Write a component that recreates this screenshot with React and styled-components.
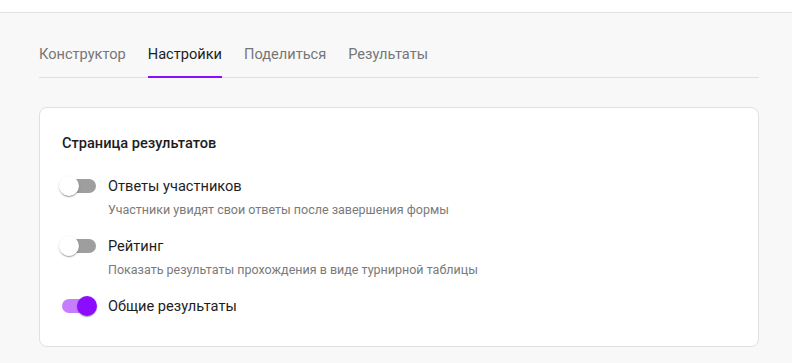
import styled, { createGlobalStyle } from "styled-components"

const GlobalStyle = createGlobalStyle`
    html, body {
        margin: 0;
        padding: 0;
        background: #f8f8f8;
        font-family: Roboto, "Liberation Sans", Arial, sans-serif;
    }
`

const tabs = ["Конструктор", "Настройки", "Поделиться", "Результаты"]

const options = [
    { title: "Ответы участников", text: "Участники увидят свои ответы после завершения формы", on: false },
    { title: "Рейтинг", text: "Показать результаты прохождения в виде турнирной таблицы", on: false },
    { title: "Общие результаты", on: true },
]

export default function App() {
    return (
        <>
            <GlobalStyle />
            <Header />
            <Page>
                <Tabs>
                    {tabs.map((t) => (
                        <Tab key={t} $active={t === "Настройки"}>{t}</Tab>
                    ))}
                </Tabs>
                <Card>
                    <Title>Страница результатов</Title>
                    <List>
                        {options.map((o) => (
                            <Row key={o.title}>
                                <Switch $on={o.on}>
                                    <Track $on={o.on} />
                                    <Thumb $on={o.on} />
                                </Switch>
                                <div>
                                    <Label>{o.title}</Label>
                                    {o.text && <Hint>{o.text}</Hint>}
                                </div>
                            </Row>
                        ))}
                    </List>
                </Card>
            </Page>
        </>
    )
}

const Header = styled.div`
    height: 12px;
    background: #fff;
    border-bottom: 1px solid #e2e2e2;
`

const Page = styled.div`
    padding: 17px 33px 0 39px;
`

const Tabs = styled.div`
    display: flex;
    gap: 22px;
    border-bottom: 1px solid #e0e0e0;
`

const Tab = styled.div`
    height: 47px;
    display: flex;
    align-items: center;
    font-size: 14.6px;
    color: ${(p) => (p.$active ? "#1d1d1d" : "#767676")};
    box-shadow: ${(p) => (p.$active ? "inset 0 -2px 0 #8b0cff" : "none")};
    margin-bottom: -1px;
    padding-bottom: 1px;
`

const Card = styled.div`
    margin-top: 29px;
    background: #fff;
    border: 1px solid #e0e0e0;
    border-radius: 8px;
    padding: 25px 22px 29px;
`

const Title = styled.div`
    font-size: 14.6px;
    font-weight: 500;
    line-height: 20px;
    color: #1d1d1d;
`

const List = styled.div`
    margin-top: 22px;
    display: flex;
    flex-direction: column;
    gap: 16px;
`

const Row = styled.div`
    display: grid;
    grid-template-columns: 46px 1fr;
    align-items: start;
`

const Switch = styled.div`
    position: relative;
    width: 34px;
    height: 22px;
`

const Track = styled.div`
    position: absolute;
    left: 0;
    top: 4px;
    width: 34px;
    height: 14px;
    border-radius: 7px;
    background: ${(p) => (p.$on ? "#c77dff" : "#9e9e9e")};
`

const Thumb = styled.div`
    position: absolute;
    top: 1px;
    left: ${(p) => (p.$on ? "15px" : "-3px")};
    width: 20px;
    height: 20px;
    border-radius: 50%;
    background: ${(p) => (p.$on ? "#8b0cff" : "#fff")};
    box-shadow: 0 2px 1px -1px rgba(0, 0, 0, 0.2), 0 1px 1px 0 rgba(0, 0, 0, 0.14), 0 1px 3px 0 rgba(0, 0, 0, 0.12);
`

const Label = styled.div`
    font-size: 14.6px;
    line-height: 22px;
    color: #1d1d1d;
`

const Hint = styled.div`
    margin-top: 4px;
    font-size: 12.5px;
    line-height: 18px;
    color: #7a7a7a;
`
